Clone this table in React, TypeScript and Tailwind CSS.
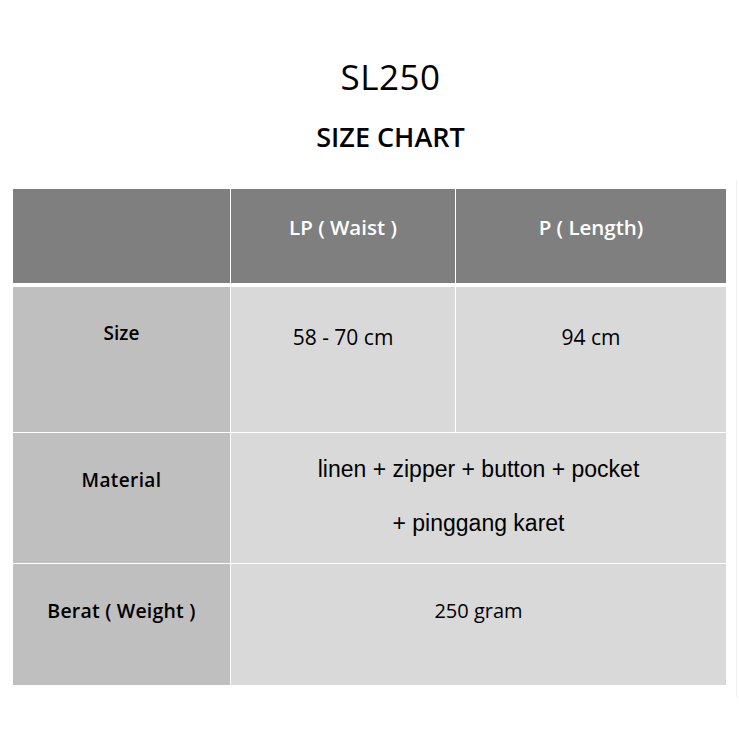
import React from 'react';

const sans = { fontFamily: '"Open Sans", "Noto Sans", sans-serif' };
const arial = { fontFamily: '"Liberation Sans", Arial, sans-serif' };

const App: React.FC = () => {
  return (
    <div className="w-[739px] h-[739px] bg-white relative overflow-hidden" style={sans}>
      {/* Titles */}
      <div className="pt-[56px] pl-[42px] flex flex-col items-center text-black">
        <div className="text-[35px] leading-[42px] tracking-[0.5px]">SL250</div>
        <div className="mt-[22px] text-[27px] leading-[34px] font-semibold">SIZE CHART</div>
      </div>

      {/* Table */}
      <div className="ml-[13px] mt-[35px] w-[713px] flex flex-col">
        {/* header */}
        <div className="grid grid-cols-[217px_224px_270px] gap-x-px h-[94px]">
          <div className="bg-[#7f7f7f]" />
          <div className="bg-[#7f7f7f] flex justify-center pt-[24px] text-white font-semibold text-[20.5px] leading-[28px]">
            LP ( Waist )
          </div>
          <div className="bg-[#7f7f7f] flex justify-center pt-[24px] text-white font-semibold text-[20.5px] leading-[28px]">
            P ( Length)
          </div>
        </div>

        {/* Size */}
        <div className="mt-[4px] grid grid-cols-[217px_224px_270px] gap-x-px h-[145px]">
          <div className="bg-[#bfbfbf] flex justify-center pt-[32px] text-black font-semibold text-[19px] leading-[28px]">
            Size
          </div>
          <div className="bg-[#d9d9d9] flex justify-center pt-[36px] text-black text-[21px] leading-[28px]">
            58 - 70 cm
          </div>
          <div className="bg-[#d9d9d9] flex justify-center pt-[36px] text-black text-[21px] leading-[28px]">
            94 cm
          </div>
        </div>

        {/* Material */}
        <div className="mt-px grid grid-cols-[217px_1fr] gap-x-px h-[130px]">
          <div className="bg-[#bfbfbf] flex justify-center pt-[33px] text-black font-semibold text-[19px] leading-[28px] tracking-[0.4px]">
            Material
          </div>
          <div className="bg-[#d9d9d9] flex flex-col items-center pt-[9px] text-black text-[23px] leading-[54px]" style={arial}>
            <div>linen + zipper + button + pocket</div>
            <div>+ pinggang karet</div>
          </div>
        </div>

        {/* Berat */}
        <div className="mt-px grid grid-cols-[217px_1fr] gap-x-px h-[121px]">
          <div className="bg-[#bfbfbf] flex justify-center pt-[33px] text-black font-semibold text-[19.5px] leading-[28px] tracking-[0.2px]">
            Berat ( Weight )
          </div>
          <div className="bg-[#d9d9d9] flex justify-center pt-[33px] text-black text-[20px] leading-[28px]">
            250 gram
          </div>
        </div>
      </div>

      <div className="absolute left-[736px] top-[180px] w-px h-[517px] bg-[#f1f1f1]" />
    </div>
  );
};

export default App;
